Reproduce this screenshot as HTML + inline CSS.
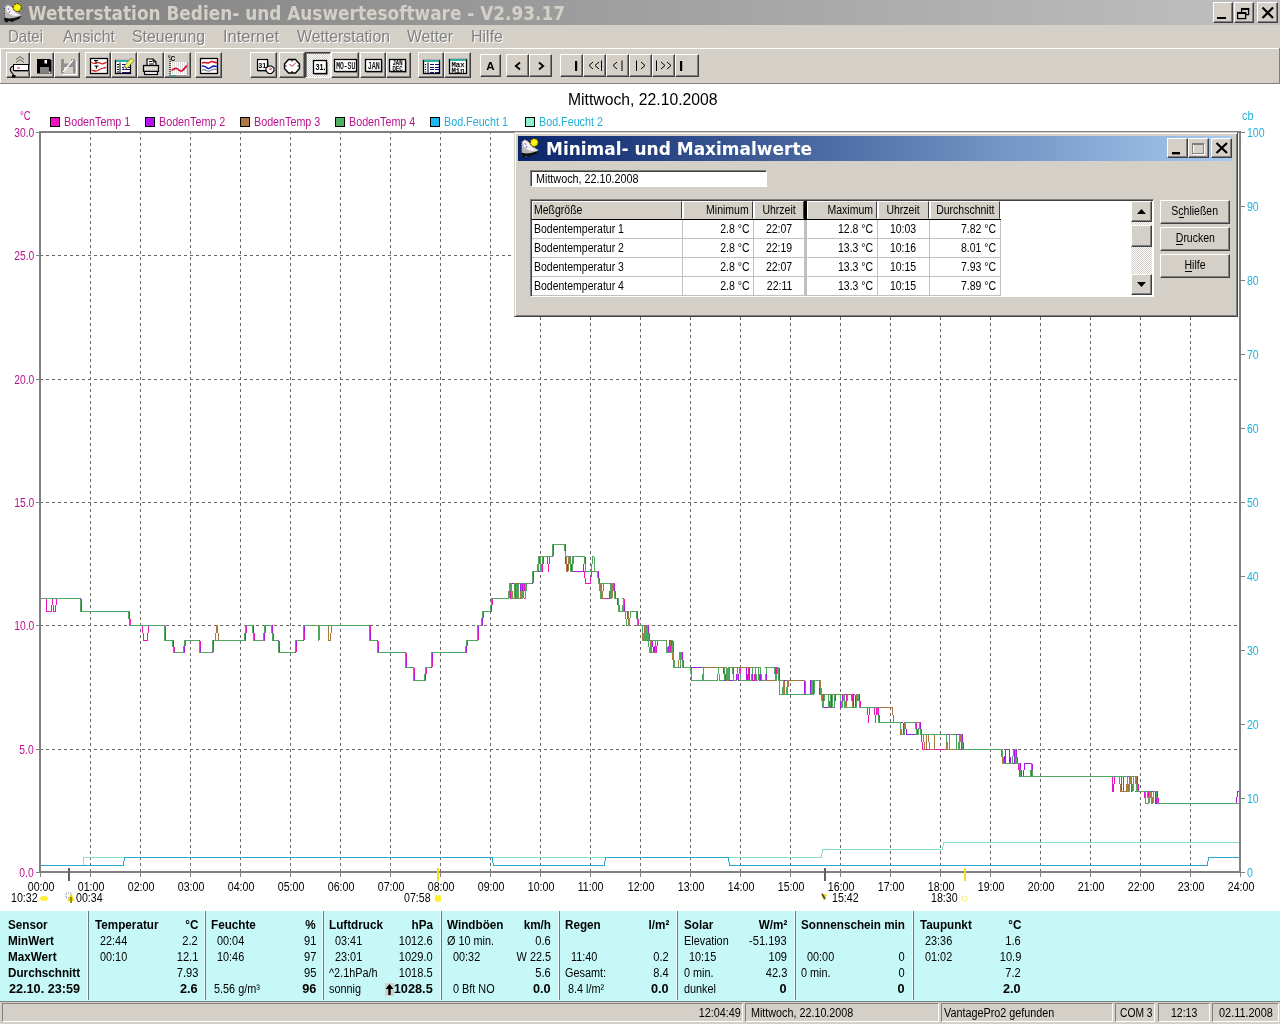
<!DOCTYPE html><html lang="de"><head><meta charset="utf-8"><title>Wetterstation Bedien- und Auswertesoftware</title><style>
html,body{margin:0;padding:0}
body{width:1280px;height:1024px;overflow:hidden;position:relative;background:#fff;font-family:"Liberation Sans",sans-serif;font-size:12px;color:#000}
.t{position:absolute;white-space:nowrap;display:block}
.a{position:absolute}
.btn{position:absolute;background:#d4d0c8;box-sizing:border-box;border:1px solid;border-color:#fff #404040 #404040 #fff;box-shadow:inset -1px -1px 0 #808080}
.btn.p{border-color:#404040 #fff #fff #404040;box-shadow:inset 1px 1px 0 #808080;background-color:#d4d0c8;background-image:linear-gradient(45deg,#fff 25%,transparent 25%,transparent 75%,#fff 75%),linear-gradient(45deg,#fff 25%,transparent 25%,transparent 75%,#fff 75%);background-size:2px 2px;background-position:0 0,1px 1px}
.sunk{position:absolute;box-sizing:border-box;border:1px solid;border-color:#808080 #fff #fff #808080}
svg{position:absolute;overflow:visible}
#root{position:absolute;left:0;top:0;width:1280px;height:1024px;will-change:transform}

</style></head><body><div id="root">
<div class="a" style="left:0;top:0;width:1280px;height:25px;background:linear-gradient(90deg,#808080 0%,#c0c0c0 100%)"></div>
<svg style="left:3px;top:3px" width="22" height="22" viewBox="0 0 22 22"><path d="M1.500 4L4.500 1.500L7 2.500L9 4L11 6.500L14 9L18.500 12L16 15L12 17L6 18.500L1.500 18.500Z" fill="#b8b8b8"/><path d="M3 4.500L5 2.500L8 4L10.500 7L13 10L17 12.500L12 13L8 12L4 9Z" fill="#f4f0fa"/><path d="M5 5l1 2M7 8l-1 2" stroke="#8070c0" stroke-width="1" fill="none"/><path d="M1.500 5v10" stroke="#303030" stroke-width="1" stroke-dasharray="1 1.500"/><path d="M1 14.500L6 15.500L11 15L16 13.500L18.500 13L16 16L12 17.500L9 19L6 18L4 19.500L1.500 18.500Z" fill="#101010"/><circle cx="14.200" cy="4.600" r="4" fill="#f4ec00" stroke="#181800" stroke-width="1" stroke-dasharray="2 1"/><circle cx="14.600" cy="4.200" r="2" fill="#fff820"/></svg>
<span class="t" style="top:4.42px;font-size:19px;line-height:19px;color:#d4d0c8;font-family:'DejaVu Sans Condensed','DejaVu Sans',sans-serif;font-weight:bold;left:28.00px;transform-origin:0 0;transform:scaleX(0.9895);">Wetterstation Bedien- und Auswertesoftware - V2.93.17</span>
<div class="btn" style="left:1213px;top:2px;width:20px;height:21px"></div>
<div class="btn" style="left:1234px;top:2px;width:20px;height:21px"></div>
<div class="btn" style="left:1257px;top:2px;width:21px;height:21px"></div>
<svg style="left:1213px;top:2px" width="64" height="20" viewBox="0 0 64 20"><rect x="4" y="15" width="9" height="2" fill="#000"/><g fill="none" stroke="#000" stroke-width="1.3"><rect x="28.6" y="6.6" width="7" height="6"/><rect x="24.6" y="10.6" width="8" height="6" fill="#d4d0c8"/></g><rect x="28" y="6" width="8.2" height="2" fill="#000"/><rect x="24" y="10" width="9.2" height="2" fill="#000"/><path d="M49.5 5.5 L60 16 M60 5.5 L49.5 16" stroke="#000" stroke-width="2.2" fill="none"/></svg>
<div class="a" style="left:0;top:25px;width:1280px;height:23px;background:#d4d0c8"></div>
<span class="t" style="top:28.61px;font-size:17px;line-height:17px;color:#fff;left:9.00px;transform-origin:0 0;transform:scaleX(0.8819);">Datei</span>
<span class="t" style="top:27.61px;font-size:17px;line-height:17px;color:#808080;left:8.00px;transform-origin:0 0;transform:scaleX(0.8819);">Datei</span>
<span class="t" style="top:28.61px;font-size:17px;line-height:17px;color:#fff;left:64.00px;transform-origin:0 0;transform:scaleX(0.9327);">Ansicht</span>
<span class="t" style="top:27.61px;font-size:17px;line-height:17px;color:#808080;left:63.00px;transform-origin:0 0;transform:scaleX(0.9327);">Ansicht</span>
<span class="t" style="top:28.61px;font-size:17px;line-height:17px;color:#fff;left:133.00px;transform-origin:0 0;transform:scaleX(0.9305);">Steuerung</span>
<span class="t" style="top:27.61px;font-size:17px;line-height:17px;color:#808080;left:132.00px;transform-origin:0 0;transform:scaleX(0.9305);">Steuerung</span>
<span class="t" style="top:28.61px;font-size:17px;line-height:17px;color:#fff;left:224.00px;transform-origin:0 0;transform:scaleX(0.9714);">Internet</span>
<span class="t" style="top:27.61px;font-size:17px;line-height:17px;color:#808080;left:223.00px;transform-origin:0 0;transform:scaleX(0.9714);">Internet</span>
<span class="t" style="top:28.61px;font-size:17px;line-height:17px;color:#fff;left:298.00px;transform-origin:0 0;transform:scaleX(0.9315);">Wetterstation</span>
<span class="t" style="top:27.61px;font-size:17px;line-height:17px;color:#808080;left:297.00px;transform-origin:0 0;transform:scaleX(0.9315);">Wetterstation</span>
<span class="t" style="top:28.61px;font-size:17px;line-height:17px;color:#fff;left:408.00px;transform-origin:0 0;transform:scaleX(0.9245);">Wetter</span>
<span class="t" style="top:27.61px;font-size:17px;line-height:17px;color:#808080;left:407.00px;transform-origin:0 0;transform:scaleX(0.9245);">Wetter</span>
<span class="t" style="top:28.61px;font-size:17px;line-height:17px;color:#fff;left:472.00px;transform-origin:0 0;transform:scaleX(0.9409);">Hilfe</span>
<span class="t" style="top:27.61px;font-size:17px;line-height:17px;color:#808080;left:471.00px;transform-origin:0 0;transform:scaleX(0.9409);">Hilfe</span>
<div class="a" style="left:0;top:48px;width:1280px;height:36px;background:#d4d0c8;box-sizing:border-box;border-top:1px solid #fff;border-bottom:1px solid #808080"></div>
<div class="a" style="left:0;top:48px;width:1px;height:35px;background:#fff"></div><div class="a" style="left:1279px;top:48px;width:1px;height:35px;background:#808080"></div>
<div class="btn" style="left:6px;top:52px;width:24px;height:26px"><svg style="left:-1px;top:0px" width="24" height="25" viewBox="0 0 24 25" ><path d="M10 6.5L14 3.5L18 6.5M10 9.5L14 6.5L18 9.5" fill="none" stroke="#606060" stroke-width="1"/><rect x="7.5" y="11.5" width="15" height="6" fill="#fff" stroke="#000" stroke-width="1"/><path d="M8 18.5h15M23.5 12v6.5" stroke="#808080" stroke-width="1" fill="none"/><path d="M11 15h3" stroke="#e02020" stroke-width="1"/><path d="M7.5 13C4.5 14 3.5 16 5 18.5S7.5 21 7.5 22.5" fill="none" stroke="#000" stroke-width="1.2"/><rect x="6" y="22" width="3.5" height="2.5" fill="#000"/></svg></div>
<div class="btn" style="left:30px;top:52px;width:24px;height:26px"><svg style="left:-1px;top:0px" width="24" height="25" viewBox="0 0 24 25" ><path d="M7 6h13l1.5 1.500V20.500H7z" fill="#000"/><rect x="10" y="14" width="9" height="6.5" fill="#808080"/><rect x="10" y="6" width="8" height="5" fill="#000"/><rect x="14.500" y="7" width="2.500" height="3.500" fill="#fff"/><rect x="19" y="18.500" width="1.500" height="1.500" fill="#fff"/></svg></div>
<div class="btn" style="left:54px;top:52px;width:26px;height:26px"><svg style="left:-1px;top:0px" width="26" height="25" viewBox="0 0 26 25" ><path d="M7 6h13l1.500 1.500V20.500H7z" fill="#909090"/><rect x="10" y="14" width="9" height="6.500" fill="#d4d0c8"/><rect x="10" y="6" width="7" height="4.500" fill="#d4d0c8"/><path d="M8 21.500h14.500V8" fill="none" stroke="#fff" stroke-width="1"/><path d="M9 19L19 7" stroke="#fff" stroke-width="1.200"/></svg></div>
<div class="btn" style="left:85px;top:52px;width:26px;height:26px"><svg style="left:-1px;top:0px" width="26" height="25" viewBox="0 0 26 25" ><rect x="5.500" y="5.500" width="17" height="15" fill="#fff" stroke="#000" stroke-width="1.300"/><path d="M6.500 9.500c2 1 3 1.500 5 .500s3-.500 4.500 .500s3 .500 5.500-1.500M6.500 17c2 .500 3 1.500 5 1s3.500-2 5-2.500s3 0 4.500-1.500" fill="none" stroke="#d81010" stroke-width="1.200"/><path d="M9 7.500h4M11 7.500v3M9.500 13h4M11.500 13v2.500" stroke="#000" stroke-width="1.200" fill="none"/></svg></div>
<div class="btn" style="left:111px;top:52px;width:26px;height:26px"><svg style="left:-1px;top:0px" width="26" height="25" viewBox="0 0 26 25" ><rect x="4.500" y="7.500" width="15" height="13" fill="#fff" stroke="#000" stroke-width="1.200"/><rect x="5" y="7" width="14" height="2" fill="#30b0a0"/><path d="M9 9.500V20" stroke="#000" stroke-width="1"/><path d="M6 11.500h2M6 14h2M6 16.500h2M6 19h2" stroke="#000" stroke-width="1"/><path d="M10.500 11.500h8M10.500 14h8M10.500 16.500h8M10.500 19h8" stroke="#101080" stroke-width="1" shape-rendering="crispEdges"/><path d="M13 13.500L20 5L23 7.500L16 15.500Z" fill="#f0f060" stroke="#606030" stroke-width=".600"/><path d="M13 13.500L12 17L16 15.500Z" fill="#fff" stroke="#404040" stroke-width=".600"/><path d="M12 17l1.500-.600-1-1z" fill="#000"/></svg></div>
<div class="btn" style="left:137px;top:52px;width:27px;height:26px"><svg style="left:-1px;top:0px" width="27" height="25" viewBox="0 0 27 25" ><path d="M10 13V6h6l3 3v4z" fill="#fff" stroke="#000" stroke-width="1.200"/><path d="M12 8.500h3M12 11h5M16 6v3h3" stroke="#000" stroke-width="1" fill="none"/><rect x="6.500" y="12.500" width="15" height="6" fill="#d4d0c8" stroke="#000" stroke-width="1.200"/><path d="M8 15.500h12" stroke="#fff" stroke-width="1.500" stroke-dasharray="1 1"/><rect x="7.500" y="18.500" width="13" height="3" fill="#fff" stroke="#000" stroke-width="1.200"/></svg></div>
<div class="btn" style="left:164px;top:52px;width:27px;height:26px"><svg style="left:-1px;top:0px" width="27" height="25" viewBox="0 0 27 25" ><rect x="7" y="9" width="16" height="13" fill="#fff"/><path d="M8 10h15M8 12h15M8 14h15M8 16h15M8 18h15M8 20h15" stroke="#c0c0c0" stroke-width="1" stroke-dasharray="1 1"/><path d="M23.500 9V22.500H7" fill="none" stroke="#a0a0a0" stroke-width="1"/><path d="M6 6v17" stroke="#000" stroke-width="1.200" stroke-dasharray="1 1"/><path d="M6 22.500h6" stroke="#30a090" stroke-width="1"/><path d="M7.500 17.500c2-1 3-2.500 5-2s3 3 5 2.500s3-3 5.500-5.500" fill="none" stroke="#e01030" stroke-width="1.800"/><text x="4" y="8" font-size="6.500" font-family="'Liberation Sans',sans-serif" font-weight="bold" fill="#000">°C</text></svg></div>
<div class="btn" style="left:195px;top:52px;width:27px;height:26px"><svg style="left:-1px;top:0px" width="27" height="25" viewBox="0 0 27 25" ><rect x="5.500" y="5.500" width="17" height="15" fill="#fff" stroke="#000" stroke-width="1.300"/><path d="M7 10c2-1 3-.500 5 0s3-1.500 5-1.500s2.500 1.500 5 1" fill="none" stroke="#e01020" stroke-width="1.600"/><path d="M7 13c2 0 3 0 4.500 1.500s3.500 1 5-.500s3.500-1 5.500-.500" fill="none" stroke="#1020c0" stroke-width="1.600"/><path d="M7 17c2-.500 3-.500 4.500 .500s3.500 .500 5-.500s3.500-.500 5.500-1" fill="none" stroke="#9090a0" stroke-width="1.400"/></svg></div>
<div class="btn" style="left:250px;top:52px;width:27px;height:26px"><svg style="left:-1px;top:0px" width="27" height="25" viewBox="0 0 27 25" ><rect x="7.500" y="6.500" width="10" height="11" fill="#fff" stroke="#000" stroke-width="1.200"/><path d="M8 18.500h10.500V8" stroke="#808080" stroke-width="1" fill="none"/><text x="8.300" y="15" font-size="8" font-family="'Liberation Sans',sans-serif" font-weight="bold" fill="#000" textLength="8" lengthAdjust="spacingAndGlyphs">31</text><path d="M16 15l2.500-2h3l2.500 2v3l-2.500 2.500h-3l-2.500-2.500z" fill="#fff" stroke="#000" stroke-width="1.100"/><path d="M20 14.500v2.500l2-1.500" fill="none" stroke="#d02020" stroke-width=".900"/></svg></div>
<div class="btn" style="left:279px;top:52px;width:26px;height:26px"><svg style="left:-1px;top:0px" width="26" height="25" viewBox="0 0 26 25" ><path d="M9.500 6.500h7l4 4.500v4.500l-4 4.500h-7l-4-4.500v-4.500z" fill="#fff" stroke="#000" stroke-width="1.300"/><path d="M13 6.500v2M13 18v2M5.500 13h2M18.500 13h2" stroke="#000" stroke-width="1.200"/><path d="M10.500 11l2.500 2.500l4-4" fill="none" stroke="#d02030" stroke-width="1"/></svg></div>
<div class="btn p" style="left:305px;top:52px;width:26px;height:26px"><svg style="left:-1px;top:0px" width="26" height="25" viewBox="0 0 26 25" ><g transform="translate(1,0)"><rect x="7.500" y="7.500" width="13" height="13" fill="#fff" stroke="#000" stroke-width="1.300"/><path d="M8.500 21.500h13V9" stroke="#808080" stroke-width="1" fill="none"/><text x="9.500" y="17.200" font-size="9.500" font-family="'Liberation Sans',sans-serif" font-weight="bold" fill="#000" textLength="10" lengthAdjust="spacingAndGlyphs">31.</text></g></svg></div>
<div class="btn" style="left:331px;top:52px;width:28px;height:26px"><svg style="left:-1px;top:0px" width="28" height="25" viewBox="0 0 28 25" ><g transform="translate(0,-1)"><rect x="3.500" y="7.500" width="22" height="12" fill="#fff" stroke="#000" stroke-width="1.300"/><path d="M4.500 20.500h22V9" stroke="#808080" stroke-width="1" fill="none"/><text x="5.200" y="17" font-size="10" font-family="'Liberation Mono',monospace" stroke="#000" stroke-width=".25" fill="#000" textLength="19" lengthAdjust="spacingAndGlyphs">MO-SU</text></g></svg></div>
<div class="btn" style="left:360px;top:52px;width:26px;height:26px"><svg style="left:-1px;top:0px" width="26" height="25" viewBox="0 0 26 25" ><g transform="translate(0,-1)"><rect x="5.500" y="7.500" width="16" height="12" fill="#fff" stroke="#000" stroke-width="1.300"/><path d="M6.500 20.500h16V9" stroke="#808080" stroke-width="1" fill="none"/><text x="7.700" y="17" font-size="10" font-family="'Liberation Mono',monospace" stroke="#000" stroke-width=".25" fill="#000" textLength="12" lengthAdjust="spacingAndGlyphs">JAN</text></g></svg></div>
<div class="btn" style="left:386px;top:52px;width:25px;height:26px"><svg style="left:-1px;top:0px" width="25" height="25" viewBox="0 0 25 25" ><g transform="translate(0,-1)"><rect x="3.500" y="7.500" width="16" height="12" fill="#fff" stroke="#000" stroke-width="1.300"/><path d="M4.500 20.500h16V9" stroke="#808080" stroke-width="1" fill="none"/><text x="6.500" y="13.400" font-size="7" font-family="'Liberation Mono',monospace" stroke="#000" stroke-width=".25" fill="#000" textLength="10" lengthAdjust="spacingAndGlyphs">JAN</text><text x="6.500" y="18.800" font-size="7" font-family="'Liberation Mono',monospace" stroke="#000" stroke-width=".25" fill="#000" textLength="10" lengthAdjust="spacingAndGlyphs">DEC</text></g></svg></div>
<div class="btn" style="left:418px;top:52px;width:26px;height:26px"><svg style="left:-1px;top:0px" width="26" height="25" viewBox="0 0 26 25" ><rect x="5.500" y="7.500" width="16" height="13" fill="#fff" stroke="#000" stroke-width="1.300"/><rect x="6" y="7" width="15" height="2" fill="#30b0a0"/><path d="M10 9.500V20" stroke="#000" stroke-width="1"/><path d="M7.500 11v9" stroke="#000" stroke-width="1.200" stroke-dasharray="1 1.500"/><path d="M11.500 11.500h9M11.500 14h9M11.500 16.500h9M11.500 19h9" stroke="#101080" stroke-width="1" stroke-dasharray="4 1" shape-rendering="crispEdges"/></svg></div>
<div class="btn" style="left:444px;top:52px;width:27px;height:26px"><svg style="left:-1px;top:0px" width="27" height="25" viewBox="0 0 27 25" ><rect x="5.500" y="6.500" width="17" height="14" fill="#fff" stroke="#000" stroke-width="1.300"/><rect x="6" y="6" width="16" height="2" fill="#30b0a0"/><text x="7.500" y="14" font-size="7.500" font-family="'Liberation Mono',monospace" stroke="#000" stroke-width=".25" fill="#000" textLength="13" lengthAdjust="spacingAndGlyphs">Max</text><text x="7.500" y="19.500" font-size="7.500" font-family="'Liberation Mono',monospace" stroke="#000" stroke-width=".25" fill="#000" textLength="13" lengthAdjust="spacingAndGlyphs">Min</text></svg></div>
<div class="btn" style="left:480px;top:54px;width:21px;height:23px"><svg style="left:-1px;top:-1px" width="21" height="23" viewBox="0 0 21 23" ><text x="10.500" y="16" font-size="11.500" text-anchor="middle" font-family="'Liberation Sans',sans-serif" font-weight="bold" fill="#000">A</text></svg></div>
<div class="btn" style="left:506px;top:54px;width:23px;height:23px"><svg style="left:-1px;top:-1px" width="23" height="23" viewBox="0 0 23 23" ><path d="M14 8.500L9.800 12L14 15.500" fill="none" stroke="#000" stroke-width="1.800"/></svg></div>
<div class="btn" style="left:529px;top:54px;width:23px;height:23px"><svg style="left:-1px;top:-1px" width="23" height="23" viewBox="0 0 23 23" ><path d="M10 8.500L14.200 12L10 15.500" fill="none" stroke="#000" stroke-width="1.800"/></svg></div>
<div class="btn" style="left:560px;top:54px;width:23px;height:23px"><svg style="left:-1px;top:-1px" width="23" height="23" viewBox="0 0 23 23" ><rect x="15" y="7" width="2.200" height="10" fill="#000"/></svg></div>
<div class="btn" style="left:583px;top:54px;width:23px;height:23px"><svg style="left:-1px;top:-1px" width="23" height="23" viewBox="0 0 23 23" ><path d="M10 8L6 11.500L10 15M16 8L12 11.500L16 15M18.500 6.500v10.500" fill="none" stroke="#000" stroke-width="1"/></svg></div>
<div class="btn" style="left:606px;top:54px;width:23px;height:23px"><svg style="left:-1px;top:-1px" width="23" height="23" viewBox="0 0 23 23" ><path d="M11 8L7 11.500L11 15M16 6.500v10.500" fill="none" stroke="#000" stroke-width="1"/></svg></div>
<div class="btn" style="left:629px;top:54px;width:23px;height:23px"><svg style="left:-1px;top:-1px" width="23" height="23" viewBox="0 0 23 23" ><path d="M12 8L16 11.500L12 15M7.500 6.500v10.500" fill="none" stroke="#000" stroke-width="1"/></svg></div>
<div class="btn" style="left:652px;top:54px;width:23px;height:23px"><svg style="left:-1px;top:-1px" width="23" height="23" viewBox="0 0 23 23" ><path d="M9 8L13 11.500L9 15M15 8L19 11.500L15 15M4.500 6.500v10.500" fill="none" stroke="#000" stroke-width="1"/></svg></div>
<div class="btn" style="left:675px;top:54px;width:24px;height:23px"><svg style="left:-1px;top:-1px" width="24" height="23" viewBox="0 0 24 23" ><rect x="5" y="7" width="2.200" height="10" fill="#000"/></svg></div>
<svg style="left:0;top:0" width="1280" height="1024" viewBox="0 0 1280 1024" shape-rendering="crispEdges">
<path d="M90.5 131V871M140.5 131V871M190.5 131V871M240.5 131V871M290.5 131V871M340.5 131V871M390.5 131V871M440.5 131V871M490.5 131V871M540.5 131V871M590.5 131V871M640.5 131V871M690.5 131V871M740.5 131V871M790.5 131V871M840.5 131V871M890.5 131V871M940.5 131V871M990.5 131V871M1040.5 131V871M1090.5 131V871M1140.5 131V871M1190.5 131V871M40 749.5H1239M40 625.5H1239M40 502.5H1239M40 379.5H1239M40 255.5H1239" stroke="#686868" stroke-width="1" stroke-dasharray="3 3" fill="none"/>
<g fill="none" stroke-width="1" shape-rendering="crispEdges">
<path d="M40 865.5H83L84 857.5H821.5L822.5 849.5H942.5L943.5 842.5H1240" stroke="#88e0c8"/>
<path d="M40 865.5H123.5L124.5 857.5H492L493.5 865.5H604.5L605.5 857.5H728.5L729.5 865.5H1207.5L1208.5 857.5H1240" stroke="#2ea6d4"/>
<path d="M40.0 598.5H46.0L47.0 611.5H51.5L52.5 598.5H52.5L53.5 611.5H55.5L56.5 598.5H81.0L82.0 611.5H129.5L130.5 625.5H142.5L143.5 640.5H147.5L148.5 625.5H165.0L166.0 640.5H173.5L174.5 652.5H184.5L185.5 640.5H200.0L201.0 652.5H213.0L214.0 640.5H245.5L246.5 625.5H253.5L254.5 640.5H264.5L265.5 625.5H272.5L273.5 640.5H279.0L280.0 652.5H296.0L297.0 640.5H304.0L305.0 625.5H328.0L329.0 640.5H330.5L331.5 625.5H370.0L371.0 640.5H378.0L379.0 652.5H406.0L407.0 667.5H414.0L415.0 680.5H425.5L426.5 667.5H432.0L433.0 652.5H466.5L467.5 640.5H478.0L479.0 625.5H482.5L483.5 611.5H491.5L492.5 598.5H508.5L509.5 583.5H510.0L511.0 598.5H510.5L511.5 583.5H511.5L512.5 598.5H515.0L516.0 583.5H517.0L518.0 598.5H522.0L523.0 583.5H524.5L525.5 598.5H525.0L526.0 583.5H533.0L534.0 571.5H538.5L539.5 556.5H540.5L541.5 571.5H542.5L543.5 556.5H547.5L548.5 571.5H548.5L549.5 556.5H553.0L554.0 544.5H565.5L566.5 571.5H567.5L568.5 556.5H570.5L571.5 571.5H584.5L585.5 583.5H590.5L591.5 571.5H598.5L599.5 583.5H600.5L601.5 598.5H609.5L610.5 583.5H610.0L611.0 598.5H612.0L613.0 583.5H614.5L615.5 598.5H618.0L619.0 611.5H622.5L623.5 598.5H624.0L625.0 611.5H627.5L628.5 625.5H629.5L630.5 611.5H637.5L638.5 625.5H642.5L643.5 640.5H644.5L645.5 625.5H646.0L647.0 640.5H647.5L648.5 625.5H648.5L649.5 640.5H652.5L653.5 652.5H654.5L655.5 640.5H655.0L656.0 652.5H656.5L657.5 640.5H666.5L667.5 652.5H668.5L669.5 640.5H670.0L671.0 652.5H671.0L672.0 640.5H673.0L674.0 652.5H673.5L674.5 667.5H680.0L681.0 652.5H682.5L683.5 667.5H723.5L724.5 680.5H725.5L726.5 667.5H727.0L728.0 680.5H728.5L729.5 667.5H733.0L734.0 680.5H736.5L737.5 667.5H740.0L741.0 680.5H747.5L748.5 667.5H748.0L749.0 680.5H754.5L755.5 667.5H755.0L756.0 680.5H758.0L759.0 667.5H758.5L759.5 680.5H765.5L766.5 667.5H775.5L776.5 680.5H776.0L777.0 667.5H777.5L778.5 680.5H783.5L784.5 694.5H787.0L788.0 680.5H805.0L806.0 694.5H811.0L812.0 680.5H813.0L814.0 694.5H814.0L815.0 680.5H819.0L820.0 694.5H821.5L822.5 707.5H823.0L824.0 694.5H828.5L829.5 707.5H830.5L831.5 694.5H843.5L844.5 707.5H846.0L847.0 694.5H852.5L853.5 707.5H856.5L857.5 694.5H859.5L860.5 707.5H867.5L868.5 722.5H868.5L869.5 707.5H874.5L875.5 722.5H875.5L876.5 707.5H878.5L879.5 722.5H903.0L904.0 734.5H904.5L905.5 722.5H916.5L917.5 734.5H918.5L919.5 722.5H920.5L921.5 734.5H921.5L922.5 749.5H961.5L962.5 734.5H962.5L963.5 749.5H1001.5L1002.5 763.5H1015.5L1016.5 749.5H1016.5L1017.5 763.5H1018.5L1019.5 776.5H1031.0L1032.0 763.5H1031.5L1032.5 776.5H1112.0L1113.0 791.5H1113.5L1114.5 776.5H1121.0L1122.0 791.5H1123.0L1124.0 776.5H1127.5L1128.5 791.5H1129.5L1130.5 776.5H1131.0L1132.0 791.5H1133.0L1134.0 776.5H1135.5L1136.5 791.5H1136.0L1137.0 776.5H1137.5L1138.5 791.5H1144.5L1145.5 803.5H1148.0L1149.0 791.5H1151.0L1152.0 803.5H1152.5L1153.5 791.5H1155.0L1156.0 803.5H1156.5L1157.5 791.5H1157.5L1158.5 803.5H1240" stroke="#e818b8"/>
<path d="M40.0 598.5H80.5L81.5 611.5H129.0L130.0 625.5H164.5L165.5 640.5H173.0L174.0 652.5H184.0L185.0 640.5H199.5L200.5 652.5H212.5L213.5 640.5H245.0L246.0 625.5H253.0L254.0 640.5H264.0L265.0 625.5H272.0L273.0 640.5H278.5L279.5 652.5H295.5L296.5 640.5H303.5L304.5 625.5H369.5L370.5 640.5H377.5L378.5 652.5H405.5L406.5 667.5H413.5L414.5 680.5H425.0L426.0 667.5H431.5L432.5 652.5H466.0L467.0 640.5H477.5L478.5 625.5H482.0L483.0 611.5H491.0L492.0 598.5H508.5L509.5 583.5H520.0L521.0 598.5H522.0L523.0 583.5H532.5L533.5 571.5H541.5L542.5 556.5H552.5L553.5 544.5H565.0L566.0 556.5H565.5L566.5 571.5H567.5L568.5 556.5H570.5L571.5 571.5H583.5L584.5 556.5H585.0L586.0 571.5H591.5L592.5 556.5H594.0L595.0 571.5H598.0L599.0 583.5H610.0L611.0 598.5H611.5L612.5 583.5H614.0L615.0 598.5H617.5L618.5 611.5H622.5L623.5 598.5H623.5L624.5 611.5H628.5L629.5 625.5H629.5L630.5 611.5H637.0L638.0 625.5H648.0L649.0 640.5H652.5L653.5 652.5H654.5L655.5 640.5H666.5L667.5 652.5H668.5L669.5 640.5H672.5L673.5 667.5H680.5L681.5 652.5H682.0L683.0 667.5H723.5L724.5 680.5H726.0L727.0 667.5H726.5L727.5 680.5H728.5L729.5 667.5H729.0L730.0 680.5H736.5L737.5 667.5H737.5L738.5 680.5H746.0L747.0 667.5H749.0L750.0 680.5H752.0L753.0 667.5H760.0L761.0 680.5H765.5L766.5 667.5H766.0L767.0 680.5H776.5L777.5 667.5H779.0L780.0 680.5H804.0L805.0 694.5H810.0L811.0 680.5H811.0L812.0 694.5H814.0L815.0 680.5H819.0L820.0 694.5H821.5L822.5 707.5H830.0L831.0 694.5H831.0L832.0 707.5H834.5L835.5 694.5H840.0L841.0 707.5H842.0L843.0 694.5H851.5L852.5 707.5H853.0L854.0 694.5H855.0L856.0 707.5H856.5L857.5 694.5H859.0L860.0 707.5H892.5L893.5 722.5H903.0L904.0 734.5H904.5L905.5 722.5H905.5L906.5 734.5H918.5L919.5 722.5H920.0L921.0 734.5H962.0L963.0 749.5H1001.5L1002.5 763.5H1004.5L1005.5 749.5H1005.0L1006.0 763.5H1009.0L1010.0 749.5H1009.5L1010.5 763.5H1014.0L1015.0 749.5H1016.0L1017.0 763.5H1020.5L1021.5 776.5H1023.5L1024.5 763.5H1032.0L1033.0 776.5H1137.0L1138.0 791.5H1155.0L1156.0 803.5H1156.5L1157.5 791.5H1157.0L1158.0 803.5H1236.5L1237.5 791.5H1240" stroke="#a818e8"/>
<path d="M40.0 598.5H80.0L81.0 611.5H128.5L129.5 625.5H164.0L165.0 640.5H172.5L173.5 652.5H183.5L184.5 640.5H199.0L200.0 652.5H212.0L213.0 640.5H215.5L216.5 625.5H217.5L218.5 640.5H244.5L245.5 625.5H252.5L253.5 640.5H263.5L264.5 625.5H271.5L272.5 640.5H278.0L279.0 652.5H295.0L296.0 640.5H303.0L304.0 625.5H328.0L329.0 640.5H330.5L331.5 625.5H369.0L370.0 640.5H377.0L378.0 652.5H405.0L406.0 667.5H413.0L414.0 680.5H424.5L425.5 667.5H431.0L432.0 652.5H465.5L466.5 640.5H477.0L478.0 625.5H481.5L482.5 611.5H490.5L491.5 598.5H509.0L510.0 583.5H511.5L512.5 598.5H516.0L517.0 583.5H517.0L518.0 598.5H520.5L521.5 583.5H521.0L522.0 598.5H523.0L524.0 583.5H532.0L533.0 571.5H537.5L538.5 556.5H552.0L553.0 544.5H564.5L565.5 556.5H566.0L567.0 571.5H568.0L569.0 556.5H569.5L570.5 571.5H572.5L573.5 556.5H584.5L585.5 571.5H597.5L598.5 583.5H600.5L601.5 598.5H602.5L603.5 583.5H610.0L611.0 598.5H612.0L613.0 583.5H613.5L614.5 598.5H618.5L619.5 611.5H622.5L623.5 598.5H623.0L624.0 611.5H628.0L629.0 625.5H629.5L630.5 611.5H636.5L637.5 625.5H642.0L643.0 640.5H643.5L644.5 625.5H645.0L646.0 640.5H647.0L648.0 625.5H647.5L648.5 640.5H648.5L649.5 652.5H650.0L651.0 640.5H651.0L652.0 652.5H655.0L656.0 640.5H666.5L667.5 652.5H669.5L670.5 640.5H672.0L673.0 652.5H672.5L673.5 667.5H678.5L679.5 652.5H681.5L682.5 667.5H691.0L692.0 680.5H703.0L704.0 667.5H727.0L728.0 680.5H729.0L730.0 667.5H760.5L761.5 680.5H776.5L777.5 667.5H777.5L778.5 680.5H784.0L785.0 694.5H787.5L788.5 680.5H805.0L806.0 694.5H811.0L812.0 680.5H820.5L821.5 694.5H822.5L823.5 707.5H823.5L824.5 694.5H844.5L845.5 707.5H846.5L847.5 694.5H851.5L852.5 707.5H856.0L857.0 694.5H858.5L859.5 707.5H892.5L893.5 722.5H900.0L901.0 734.5H904.0L905.0 722.5H919.5L920.5 734.5H923.5L924.5 749.5H926.0L927.0 734.5H928.5L929.5 749.5H934.0L935.0 734.5H946.0L947.0 749.5H959.5L960.5 734.5H961.5L962.5 749.5H1001.5L1002.5 763.5H1012.5L1013.5 749.5H1015.0L1016.0 763.5H1019.5L1020.5 776.5H1119.5L1120.5 791.5H1126.5L1127.5 776.5H1127.5L1128.5 791.5H1129.5L1130.5 776.5H1136.5L1137.5 791.5H1145.0L1146.0 803.5H1148.5L1149.5 791.5H1150.5L1151.5 803.5H1152.5L1153.5 791.5H1156.5L1157.5 803.5H1240" stroke="#a87840"/>
<path d="M40.0 598.5H80.0L81.0 611.5H128.5L129.5 625.5H164.0L165.0 640.5H172.5L173.5 652.5H183.5L184.5 640.5H199.0L200.0 652.5H212.0L213.0 640.5H244.5L245.5 625.5H252.5L253.5 640.5H263.5L264.5 625.5H271.5L272.5 640.5H278.0L279.0 652.5H295.0L296.0 640.5H303.0L304.0 625.5H318.0L319.0 640.5H319.0L320.0 625.5H369.0L370.0 640.5H377.0L378.0 652.5H405.0L406.0 667.5H413.0L414.0 680.5H424.5L425.5 667.5H431.0L432.0 652.5H465.5L466.5 640.5H477.0L478.0 625.5H481.5L482.5 611.5H490.5L491.5 598.5H508.5L509.5 583.5H510.5L511.5 598.5H514.0L515.0 583.5H516.0L517.0 598.5H518.0L519.0 583.5H521.0L522.0 598.5H522.5L523.5 583.5H525.0L526.0 598.5H525.5L526.5 583.5H532.0L533.0 571.5H538.0L539.0 556.5H540.0L541.0 571.5H541.5L542.5 556.5H552.0L553.0 544.5H564.5L565.5 556.5H570.0L571.0 571.5H572.0L573.0 556.5H584.5L585.5 571.5H591.5L592.5 556.5H594.0L595.0 571.5H597.5L598.5 583.5H599.5L600.5 598.5H601.0L602.0 583.5H610.0L611.0 598.5H611.0L612.0 583.5H613.5L614.5 598.5H618.0L619.0 611.5H622.5L623.5 598.5H623.0L624.0 611.5H625.5L626.5 625.5H629.5L630.5 611.5H636.5L637.5 625.5H642.5L643.5 640.5H644.5L645.5 625.5H646.0L647.0 640.5H647.0L648.0 625.5H647.5L648.5 640.5H648.5L649.5 652.5H650.5L651.5 640.5H666.0L667.0 652.5H671.5L672.5 640.5H672.0L673.0 652.5H673.5L674.5 667.5H680.0L681.0 652.5H681.5L682.5 667.5H690.5L691.5 680.5H702.5L703.5 667.5H703.0L704.0 680.5H717.5L718.5 667.5H718.5L719.5 680.5H724.0L725.0 667.5H726.0L727.0 680.5H728.0L729.0 667.5H732.5L733.5 680.5H737.0L738.0 667.5H739.5L740.5 680.5H751.5L752.5 667.5H755.5L756.5 680.5H758.0L759.0 667.5H760.5L761.5 680.5H765.5L766.5 667.5H774.5L775.5 680.5H776.5L777.5 667.5H778.5L779.5 694.5H782.5L783.5 680.5H783.0L784.0 694.5H786.5L787.5 680.5H787.0L788.0 694.5H811.5L812.5 680.5H812.0L813.0 694.5H814.0L815.0 680.5H819.5L820.5 694.5H821.5L822.5 707.5H823.5L824.5 694.5H828.0L829.0 707.5H830.0L831.0 694.5H832.0L833.0 707.5H834.0L835.0 694.5H840.5L841.5 707.5H842.5L843.5 694.5H844.0L845.0 707.5H856.5L857.5 694.5H858.5L859.5 707.5H877.5L878.5 722.5H900.5L901.5 734.5H904.5L905.5 722.5H915.5L916.5 734.5H918.5L919.5 722.5H919.5L920.5 734.5H946.5L947.5 749.5H949.0L950.0 734.5H956.0L957.0 749.5H958.5L959.5 734.5H961.5L962.5 749.5H1002.5L1003.5 763.5H1012.5L1013.5 749.5H1015.5L1016.5 763.5H1019.5L1020.5 776.5H1030.5L1031.5 763.5H1031.5L1032.5 776.5H1127.0L1128.0 791.5H1129.0L1130.0 776.5H1131.5L1132.5 791.5H1133.0L1134.0 776.5H1135.5L1136.5 791.5H1147.5L1148.5 803.5H1149.0L1150.0 791.5H1151.0L1152.0 803.5H1153.0L1154.0 791.5H1156.5L1157.5 803.5H1240" stroke="#50a860"/>
</g>
<g fill="#808080"><rect x="39" y="131" width="2" height="742"/><rect x="1239" y="131" width="2" height="742"/><rect x="39" y="131" width="1202" height="2"/><rect x="39" y="871" width="1202" height="2"/>
<rect x="36" y="872" width="3" height="1"/>
<rect x="36" y="749" width="3" height="1"/>
<rect x="36" y="625" width="3" height="1"/>
<rect x="36" y="502" width="3" height="1"/>
<rect x="36" y="379" width="3" height="1"/>
<rect x="36" y="255" width="3" height="1"/>
<rect x="36" y="132" width="3" height="1"/>
<rect x="1241" y="872" width="4" height="1"/>
<rect x="1241" y="798" width="4" height="1"/>
<rect x="1241" y="724" width="4" height="1"/>
<rect x="1241" y="650" width="4" height="1"/>
<rect x="1241" y="576" width="4" height="1"/>
<rect x="1241" y="502" width="4" height="1"/>
<rect x="1241" y="428" width="4" height="1"/>
<rect x="1241" y="354" width="4" height="1"/>
<rect x="1241" y="280" width="4" height="1"/>
<rect x="1241" y="206" width="4" height="1"/>
<rect x="1241" y="132" width="4" height="1"/>
<rect x="40" y="873" width="1" height="4"/>
<rect x="90" y="873" width="1" height="4"/>
<rect x="140" y="873" width="1" height="4"/>
<rect x="190" y="873" width="1" height="4"/>
<rect x="240" y="873" width="1" height="4"/>
<rect x="290" y="873" width="1" height="4"/>
<rect x="340" y="873" width="1" height="4"/>
<rect x="390" y="873" width="1" height="4"/>
<rect x="440" y="873" width="1" height="4"/>
<rect x="490" y="873" width="1" height="4"/>
<rect x="540" y="873" width="1" height="4"/>
<rect x="590" y="873" width="1" height="4"/>
<rect x="640" y="873" width="1" height="4"/>
<rect x="690" y="873" width="1" height="4"/>
<rect x="740" y="873" width="1" height="4"/>
<rect x="790" y="873" width="1" height="4"/>
<rect x="840" y="873" width="1" height="4"/>
<rect x="890" y="873" width="1" height="4"/>
<rect x="940" y="873" width="1" height="4"/>
<rect x="990" y="873" width="1" height="4"/>
<rect x="1040" y="873" width="1" height="4"/>
<rect x="1090" y="873" width="1" height="4"/>
<rect x="1140" y="873" width="1" height="4"/>
<rect x="1190" y="873" width="1" height="4"/>
<rect x="1240" y="873" width="1" height="4"/>
</g>
<rect x="68" y="868" width="2" height="13" fill="#606060"/><rect x="824" y="868" width="2" height="13" fill="#606060"/>
<rect x="437" y="868" width="2" height="13" fill="#f0e020"/><rect x="964" y="868" width="2" height="13" fill="#f0e020"/>
<g shape-rendering="auto">
<ellipse cx="44" cy="898.5" rx="4" ry="2.5" fill="#ffee30"/>
<path d="M66 893h5v5h-5z" fill="none" stroke="#8080c0" stroke-width="1" stroke-dasharray="1 1"/><path d="M71 893l3.5 8h-7z" fill="#f0d800"/><rect x="70" y="897" width="2" height="6" fill="#a09000"/>
<circle cx="438" cy="898.5" r="3.4" fill="#ffee30"/>
<path d="M821 893l6 2-3 6z" fill="#f0d800"/><path d="M822 894l3 5" stroke="#404040" stroke-width="1.5"/>
<circle cx="964.5" cy="898.5" r="2.5" fill="none" stroke="#f6f088" stroke-width="1.2"/>
</g>
<rect x="50.5" y="117.5" width="9" height="9" fill="#f010c0" stroke="#000" stroke-width="1"/>
<rect x="145.5" y="117.5" width="9" height="9" fill="#b414f0" stroke="#000" stroke-width="1"/>
<rect x="240.5" y="117.5" width="9" height="9" fill="#b07840" stroke="#000" stroke-width="1"/>
<rect x="335.5" y="117.5" width="9" height="9" fill="#50b060" stroke="#000" stroke-width="1"/>
<rect x="430.5" y="117.5" width="9" height="9" fill="#20b8f0" stroke="#000" stroke-width="1"/>
<rect x="525.5" y="117.5" width="9" height="9" fill="#90f0d0" stroke="#000" stroke-width="1"/>
</svg>
<span class="t" style="top:92.46px;font-size:16px;line-height:16px;color:#000;left:568.00px;transform-origin:0 0;transform:scaleX(0.9829);">Mittwoch, 22.10.2008</span>
<span class="t" style="top:115.84px;font-size:12px;line-height:12px;color:#b8128e;left:64.00px;transform-origin:0 0;transform:scaleX(0.8950);">BodenTemp 1</span>
<span class="t" style="top:115.84px;font-size:12px;line-height:12px;color:#b8128e;left:159.00px;transform-origin:0 0;transform:scaleX(0.8950);">BodenTemp 2</span>
<span class="t" style="top:115.84px;font-size:12px;line-height:12px;color:#b8128e;left:254.00px;transform-origin:0 0;transform:scaleX(0.8950);">BodenTemp 3</span>
<span class="t" style="top:115.84px;font-size:12px;line-height:12px;color:#b8128e;left:349.00px;transform-origin:0 0;transform:scaleX(0.8950);">BodenTemp 4</span>
<span class="t" style="top:115.84px;font-size:12px;line-height:12px;color:#20b0d8;left:444.00px;transform-origin:0 0;transform:scaleX(0.8950);">Bod.Feucht 1</span>
<span class="t" style="top:115.84px;font-size:12px;line-height:12px;color:#20b0d8;left:539.00px;transform-origin:0 0;transform:scaleX(0.8950);">Bod.Feucht 2</span>
<span class="t" style="top:110.34px;font-size:12px;line-height:12px;color:#b8128e;left:20.00px;transform-origin:0 0;transform:scaleX(0.8000);">°C</span>
<span class="t" style="top:110.34px;font-size:12px;line-height:12px;color:#20b0d8;left:1242.00px;transform-origin:0 0;transform:scaleX(0.9000);">cb</span>
<span class="t" style="top:866.84px;font-size:12px;line-height:12px;color:#b8128e;left:17.32px;transform-origin:100% 0;transform:scaleX(0.8600);">0.0</span>
<span class="t" style="top:743.51px;font-size:12px;line-height:12px;color:#b8128e;left:17.32px;transform-origin:100% 0;transform:scaleX(0.8600);">5.0</span>
<span class="t" style="top:620.18px;font-size:12px;line-height:12px;color:#b8128e;left:10.64px;transform-origin:100% 0;transform:scaleX(0.8600);">10.0</span>
<span class="t" style="top:496.84px;font-size:12px;line-height:12px;color:#b8128e;left:10.64px;transform-origin:100% 0;transform:scaleX(0.8600);">15.0</span>
<span class="t" style="top:373.51px;font-size:12px;line-height:12px;color:#b8128e;left:10.64px;transform-origin:100% 0;transform:scaleX(0.8600);">20.0</span>
<span class="t" style="top:250.18px;font-size:12px;line-height:12px;color:#b8128e;left:10.64px;transform-origin:100% 0;transform:scaleX(0.8600);">25.0</span>
<span class="t" style="top:126.84px;font-size:12px;line-height:12px;color:#b8128e;left:10.64px;transform-origin:100% 0;transform:scaleX(0.8600);">30.0</span>
<span class="t" style="top:867.04px;font-size:12px;line-height:12px;color:#20b0d8;left:1247.00px;transform-origin:0 0;transform:scaleX(0.8800);">0</span>
<span class="t" style="top:793.04px;font-size:12px;line-height:12px;color:#20b0d8;left:1247.00px;transform-origin:0 0;transform:scaleX(0.8800);">10</span>
<span class="t" style="top:719.04px;font-size:12px;line-height:12px;color:#20b0d8;left:1247.00px;transform-origin:0 0;transform:scaleX(0.8800);">20</span>
<span class="t" style="top:645.04px;font-size:12px;line-height:12px;color:#20b0d8;left:1247.00px;transform-origin:0 0;transform:scaleX(0.8800);">30</span>
<span class="t" style="top:571.04px;font-size:12px;line-height:12px;color:#20b0d8;left:1247.00px;transform-origin:0 0;transform:scaleX(0.8800);">40</span>
<span class="t" style="top:497.04px;font-size:12px;line-height:12px;color:#20b0d8;left:1247.00px;transform-origin:0 0;transform:scaleX(0.8800);">50</span>
<span class="t" style="top:423.04px;font-size:12px;line-height:12px;color:#20b0d8;left:1247.00px;transform-origin:0 0;transform:scaleX(0.8800);">60</span>
<span class="t" style="top:349.04px;font-size:12px;line-height:12px;color:#20b0d8;left:1247.00px;transform-origin:0 0;transform:scaleX(0.8800);">70</span>
<span class="t" style="top:275.04px;font-size:12px;line-height:12px;color:#20b0d8;left:1247.00px;transform-origin:0 0;transform:scaleX(0.8800);">80</span>
<span class="t" style="top:201.04px;font-size:12px;line-height:12px;color:#20b0d8;left:1247.00px;transform-origin:0 0;transform:scaleX(0.8800);">90</span>
<span class="t" style="top:127.04px;font-size:12px;line-height:12px;color:#20b0d8;left:1247.00px;transform-origin:0 0;transform:scaleX(0.8800);">100</span>
<span class="t" style="top:881.34px;font-size:12px;line-height:12px;color:#000;left:25.98px;transform-origin:50% 0;transform:scaleX(0.8850);">00:00</span>
<span class="t" style="top:881.34px;font-size:12px;line-height:12px;color:#000;left:75.98px;transform-origin:50% 0;transform:scaleX(0.8850);">01:00</span>
<span class="t" style="top:881.34px;font-size:12px;line-height:12px;color:#000;left:125.98px;transform-origin:50% 0;transform:scaleX(0.8850);">02:00</span>
<span class="t" style="top:881.34px;font-size:12px;line-height:12px;color:#000;left:175.99px;transform-origin:50% 0;transform:scaleX(0.8850);">03:00</span>
<span class="t" style="top:881.34px;font-size:12px;line-height:12px;color:#000;left:225.99px;transform-origin:50% 0;transform:scaleX(0.8850);">04:00</span>
<span class="t" style="top:881.34px;font-size:12px;line-height:12px;color:#000;left:275.99px;transform-origin:50% 0;transform:scaleX(0.8850);">05:00</span>
<span class="t" style="top:881.34px;font-size:12px;line-height:12px;color:#000;left:325.99px;transform-origin:50% 0;transform:scaleX(0.8850);">06:00</span>
<span class="t" style="top:881.34px;font-size:12px;line-height:12px;color:#000;left:375.99px;transform-origin:50% 0;transform:scaleX(0.8850);">07:00</span>
<span class="t" style="top:881.34px;font-size:12px;line-height:12px;color:#000;left:425.99px;transform-origin:50% 0;transform:scaleX(0.8850);">08:00</span>
<span class="t" style="top:881.34px;font-size:12px;line-height:12px;color:#000;left:475.99px;transform-origin:50% 0;transform:scaleX(0.8850);">09:00</span>
<span class="t" style="top:881.34px;font-size:12px;line-height:12px;color:#000;left:525.99px;transform-origin:50% 0;transform:scaleX(0.8850);">10:00</span>
<span class="t" style="top:881.34px;font-size:12px;line-height:12px;color:#000;left:576.43px;transform-origin:50% 0;transform:scaleX(0.8850);">11:00</span>
<span class="t" style="top:881.34px;font-size:12px;line-height:12px;color:#000;left:625.99px;transform-origin:50% 0;transform:scaleX(0.8850);">12:00</span>
<span class="t" style="top:881.34px;font-size:12px;line-height:12px;color:#000;left:675.99px;transform-origin:50% 0;transform:scaleX(0.8850);">13:00</span>
<span class="t" style="top:881.34px;font-size:12px;line-height:12px;color:#000;left:725.99px;transform-origin:50% 0;transform:scaleX(0.8850);">14:00</span>
<span class="t" style="top:881.34px;font-size:12px;line-height:12px;color:#000;left:775.99px;transform-origin:50% 0;transform:scaleX(0.8850);">15:00</span>
<span class="t" style="top:881.34px;font-size:12px;line-height:12px;color:#000;left:825.99px;transform-origin:50% 0;transform:scaleX(0.8850);">16:00</span>
<span class="t" style="top:881.34px;font-size:12px;line-height:12px;color:#000;left:875.99px;transform-origin:50% 0;transform:scaleX(0.8850);">17:00</span>
<span class="t" style="top:881.34px;font-size:12px;line-height:12px;color:#000;left:925.99px;transform-origin:50% 0;transform:scaleX(0.8850);">18:00</span>
<span class="t" style="top:881.34px;font-size:12px;line-height:12px;color:#000;left:975.99px;transform-origin:50% 0;transform:scaleX(0.8850);">19:00</span>
<span class="t" style="top:881.34px;font-size:12px;line-height:12px;color:#000;left:1025.98px;transform-origin:50% 0;transform:scaleX(0.8850);">20:00</span>
<span class="t" style="top:881.34px;font-size:12px;line-height:12px;color:#000;left:1075.98px;transform-origin:50% 0;transform:scaleX(0.8850);">21:00</span>
<span class="t" style="top:881.34px;font-size:12px;line-height:12px;color:#000;left:1125.98px;transform-origin:50% 0;transform:scaleX(0.8850);">22:00</span>
<span class="t" style="top:881.34px;font-size:12px;line-height:12px;color:#000;left:1175.98px;transform-origin:50% 0;transform:scaleX(0.8850);">23:00</span>
<span class="t" style="top:881.34px;font-size:12px;line-height:12px;color:#000;left:1225.98px;transform-origin:50% 0;transform:scaleX(0.8850);">24:00</span>
<span class="t" style="top:892.34px;font-size:12px;line-height:12px;color:#000;left:11.00px;transform-origin:0 0;transform:scaleX(0.8850);">10:32</span>
<span class="t" style="top:892.34px;font-size:12px;line-height:12px;color:#000;left:76.00px;transform-origin:0 0;transform:scaleX(0.8850);">00:34</span>
<span class="t" style="top:892.34px;font-size:12px;line-height:12px;color:#000;left:404.00px;transform-origin:0 0;transform:scaleX(0.8850);">07:58</span>
<span class="t" style="top:892.34px;font-size:12px;line-height:12px;color:#000;left:832.00px;transform-origin:0 0;transform:scaleX(0.8850);">15:42</span>
<span class="t" style="top:892.34px;font-size:12px;line-height:12px;color:#000;left:931.00px;transform-origin:0 0;transform:scaleX(0.8850);">18:30</span>
<div class="a" style="left:514px;top:132px;width:724px;height:185px;background:#d4d0c8;box-sizing:border-box;border:1px solid;border-color:#d4d0c8 #404040 #404040 #d4d0c8;box-shadow:inset 1px 1px 0 #fff,inset -1px -1px 0 #808080"></div>
<div class="a" style="left:518px;top:136px;width:714px;height:25px;background:linear-gradient(90deg,#0a246a 0%,#a6caf0 100%)"></div>
<svg style="left:520px;top:138px" width="22" height="22" viewBox="0 0 22 22"><path d="M1.500 4L4.500 1.500L7 2.500L9 4L11 6.500L14 9L18.500 12L16 15L12 17L6 18.500L1.500 18.500Z" fill="#b8b8b8"/><path d="M3 4.500L5 2.500L8 4L10.500 7L13 10L17 12.500L12 13L8 12L4 9Z" fill="#f4f0fa"/><path d="M5 5l1 2M7 8l-1 2" stroke="#8070c0" stroke-width="1" fill="none"/><path d="M1.500 5v10" stroke="#303030" stroke-width="1" stroke-dasharray="1 1.500"/><path d="M1 14.500L6 15.500L11 15L16 13.500L18.500 13L16 16L12 17.500L9 19L6 18L4 19.500L1.500 18.500Z" fill="#101010"/><circle cx="14.200" cy="4.600" r="4" fill="#f4ec00" stroke="#181800" stroke-width="1" stroke-dasharray="2 1"/><circle cx="14.600" cy="4.200" r="2" fill="#fff820"/></svg>
<span class="t" style="top:140.36px;font-size:18px;line-height:18px;color:#fff;font-family:'DejaVu Sans Condensed','DejaVu Sans',sans-serif;font-weight:bold;left:546.00px;transform-origin:0 0;transform:scaleX(1.0482);">Minimal- und Maximalwerte</span>
<div class="btn" style="left:1167px;top:138px;width:21px;height:20px"></div>
<div class="btn" style="left:1188px;top:138px;width:21px;height:20px"></div>
<div class="btn" style="left:1211px;top:138px;width:21px;height:20px"></div>
<svg style="left:1167px;top:138px" width="66" height="20" viewBox="0 0 66 20"><rect x="5" y="14" width="8" height="2.4" fill="#000"/><rect x="26.5" y="6.5" width="11" height="10" fill="none" stroke="#fff" stroke-width="1"/><rect x="25.5" y="5.500" width="11" height="10" fill="none" stroke="#808080" stroke-width="1"/><rect x="25" y="5" width="12" height="2" fill="#808080"/><path d="M49.5 5 L60 15 M60 5 L49.5 15" stroke="#000" stroke-width="2.2" fill="none"/></svg>
<div class="a" style="left:530px;top:170px;width:237px;height:17px;background:#fff;box-sizing:border-box;border:1px solid;border-color:#808080 #fff #fff #808080;box-shadow:inset 1px 1px 0 #404040"></div>
<span class="t" style="top:172.64px;font-size:12px;line-height:12px;color:#000;left:535.60px;transform-origin:0 0;transform:scaleX(0.8986);">Mittwoch, 22.10.2008</span>
<div class="a" style="left:530px;top:199px;width:624px;height:98px;background:#fff;box-sizing:border-box;border:1px solid;border-color:#808080 #fff #fff #808080;box-shadow:inset 1px 1px 0 #404040"></div>
<div class="a" style="left:532px;top:201px;width:150px;height:18px;background:#d4d0c8;box-sizing:border-box;border:1px solid;border-color:#fff #404040 #d4d0c8 #fff;"></div>
<div class="a" style="left:683px;top:201px;width:70px;height:18px;background:#d4d0c8;box-sizing:border-box;border:1px solid;border-color:#fff #404040 #d4d0c8 #fff;"></div>
<div class="a" style="left:754px;top:201px;width:50px;height:18px;background:#d4d0c8;box-sizing:border-box;border:1px solid;border-color:#fff #404040 #d4d0c8 #fff;"></div>
<div class="a" style="left:807px;top:201px;width:70px;height:18px;background:#d4d0c8;box-sizing:border-box;border:1px solid;border-color:#fff #404040 #d4d0c8 #fff;"></div>
<div class="a" style="left:878px;top:201px;width:51px;height:18px;background:#d4d0c8;box-sizing:border-box;border:1px solid;border-color:#fff #404040 #d4d0c8 #fff;"></div>
<div class="a" style="left:930px;top:201px;width:70px;height:18px;background:#d4d0c8;box-sizing:border-box;border:1px solid;border-color:#fff #404040 #d4d0c8 #fff;"></div>
<div class="a" style="left:532px;top:219px;width:469px;height:1px;background:#000"></div>
<div class="a" style="left:804px;top:201px;width:3px;height:19px;background:#000"></div>
<div class="a" style="left:682px;top:220px;width:1px;height:76px;background:#c0c0c0"></div>
<div class="a" style="left:753px;top:220px;width:1px;height:76px;background:#c0c0c0"></div>
<div class="a" style="left:804px;top:220px;width:1px;height:76px;background:#c0c0c0"></div>
<div class="a" style="left:877px;top:220px;width:1px;height:76px;background:#c0c0c0"></div>
<div class="a" style="left:929px;top:220px;width:1px;height:76px;background:#c0c0c0"></div>
<div class="a" style="left:1000px;top:220px;width:1px;height:76px;background:#c0c0c0"></div>
<div class="a" style="left:804px;top:220px;width:3px;height:76px;background:#c0c0c0"></div>
<div class="a" style="left:532px;top:238px;width:469px;height:1px;background:#c0c0c0"></div>
<div class="a" style="left:532px;top:257px;width:469px;height:1px;background:#c0c0c0"></div>
<div class="a" style="left:532px;top:276px;width:469px;height:1px;background:#c0c0c0"></div>
<div class="a" style="left:532px;top:295px;width:469px;height:1px;background:#c0c0c0"></div>
<span class="t" style="top:204.04px;font-size:12px;line-height:12px;color:#000;left:533.80px;transform-origin:0 0;transform:scaleX(0.8750);">Meßgröße</span>
<span class="t" style="top:204.04px;font-size:12px;line-height:12px;color:#000;left:700.33px;transform-origin:100% 0;transform:scaleX(0.8750);">Minimum</span>
<span class="t" style="top:204.04px;font-size:12px;line-height:12px;color:#000;left:760.49px;transform-origin:50% 0;transform:scaleX(0.8750);">Uhrzeit</span>
<span class="t" style="top:204.04px;font-size:12px;line-height:12px;color:#000;left:821.00px;transform-origin:100% 0;transform:scaleX(0.8750);">Maximum</span>
<span class="t" style="top:204.04px;font-size:12px;line-height:12px;color:#000;left:884.49px;transform-origin:50% 0;transform:scaleX(0.8750);">Uhrzeit</span>
<span class="t" style="top:204.04px;font-size:12px;line-height:12px;color:#000;left:931.65px;transform-origin:50% 0;transform:scaleX(0.8750);">Durchschnitt</span>
<span class="t" style="top:222.84px;font-size:12px;line-height:12px;color:#000;left:533.60px;transform-origin:0 0;transform:scaleX(0.8750);">Bodentemperatur 1</span>
<span class="t" style="top:222.84px;font-size:12px;line-height:12px;color:#000;left:715.52px;transform-origin:100% 0;transform:scaleX(0.8750);">2.8 °C</span>
<span class="t" style="top:222.84px;font-size:12px;line-height:12px;color:#000;left:764.49px;transform-origin:50% 0;transform:scaleX(0.8750);">22:07</span>
<span class="t" style="top:222.84px;font-size:12px;line-height:12px;color:#000;left:832.85px;transform-origin:100% 0;transform:scaleX(0.8750);">12.8 °C</span>
<span class="t" style="top:222.84px;font-size:12px;line-height:12px;color:#000;left:888.49px;transform-origin:50% 0;transform:scaleX(0.8750);">10:03</span>
<span class="t" style="top:222.84px;font-size:12px;line-height:12px;color:#000;left:955.85px;transform-origin:100% 0;transform:scaleX(0.8750);">7.82 °C</span>
<span class="t" style="top:241.84px;font-size:12px;line-height:12px;color:#000;left:533.60px;transform-origin:0 0;transform:scaleX(0.8750);">Bodentemperatur 2</span>
<span class="t" style="top:241.84px;font-size:12px;line-height:12px;color:#000;left:715.52px;transform-origin:100% 0;transform:scaleX(0.8750);">2.8 °C</span>
<span class="t" style="top:241.84px;font-size:12px;line-height:12px;color:#000;left:764.49px;transform-origin:50% 0;transform:scaleX(0.8750);">22:19</span>
<span class="t" style="top:241.84px;font-size:12px;line-height:12px;color:#000;left:832.85px;transform-origin:100% 0;transform:scaleX(0.8750);">13.3 °C</span>
<span class="t" style="top:241.84px;font-size:12px;line-height:12px;color:#000;left:888.49px;transform-origin:50% 0;transform:scaleX(0.8750);">10:16</span>
<span class="t" style="top:241.84px;font-size:12px;line-height:12px;color:#000;left:955.85px;transform-origin:100% 0;transform:scaleX(0.8750);">8.01 °C</span>
<span class="t" style="top:260.84px;font-size:12px;line-height:12px;color:#000;left:533.60px;transform-origin:0 0;transform:scaleX(0.8750);">Bodentemperatur 3</span>
<span class="t" style="top:260.84px;font-size:12px;line-height:12px;color:#000;left:715.52px;transform-origin:100% 0;transform:scaleX(0.8750);">2.8 °C</span>
<span class="t" style="top:260.84px;font-size:12px;line-height:12px;color:#000;left:764.49px;transform-origin:50% 0;transform:scaleX(0.8750);">22:07</span>
<span class="t" style="top:260.84px;font-size:12px;line-height:12px;color:#000;left:832.85px;transform-origin:100% 0;transform:scaleX(0.8750);">13.3 °C</span>
<span class="t" style="top:260.84px;font-size:12px;line-height:12px;color:#000;left:888.49px;transform-origin:50% 0;transform:scaleX(0.8750);">10:15</span>
<span class="t" style="top:260.84px;font-size:12px;line-height:12px;color:#000;left:955.85px;transform-origin:100% 0;transform:scaleX(0.8750);">7.93 °C</span>
<span class="t" style="top:279.84px;font-size:12px;line-height:12px;color:#000;left:533.60px;transform-origin:0 0;transform:scaleX(0.8750);">Bodentemperatur 4</span>
<span class="t" style="top:279.84px;font-size:12px;line-height:12px;color:#000;left:715.52px;transform-origin:100% 0;transform:scaleX(0.8750);">2.8 °C</span>
<span class="t" style="top:279.84px;font-size:12px;line-height:12px;color:#000;left:764.93px;transform-origin:50% 0;transform:scaleX(0.8750);">22:11</span>
<span class="t" style="top:279.84px;font-size:12px;line-height:12px;color:#000;left:832.85px;transform-origin:100% 0;transform:scaleX(0.8750);">13.3 °C</span>
<span class="t" style="top:279.84px;font-size:12px;line-height:12px;color:#000;left:888.49px;transform-origin:50% 0;transform:scaleX(0.8750);">10:15</span>
<span class="t" style="top:279.84px;font-size:12px;line-height:12px;color:#000;left:955.85px;transform-origin:100% 0;transform:scaleX(0.8750);">7.89 °C</span>
<div class="a" style="left:1131px;top:201px;width:21px;height:94px;background:#e9e7e3;background-image:linear-gradient(45deg,#fff 25%,transparent 25%,transparent 75%,#fff 75%),linear-gradient(45deg,#fff 25%,transparent 25%,transparent 75%,#fff 75%);background-size:2px 2px;background-position:0 0,1px 1px;background-color:#d4d0c8"></div>
<div class="btn" style="left:1131px;top:201px;width:21px;height:21px"></div>
<div class="btn" style="left:1131px;top:225px;width:21px;height:22px"></div>
<div class="btn" style="left:1131px;top:274px;width:21px;height:21px"></div>
<svg style="left:1131px;top:201px" width="21" height="94" viewBox="0 0 21 94"><path d="M6 13h9l-4.5-5z M6 81h9l-4.5 5z" fill="#000"/></svg>
<div class="btn" style="left:1160px;top:200px;width:70px;height:24px"></div>
<span class="t" style="top:205.24px;font-size:12px;line-height:12px;color:#000;left:1168.32px;transform-origin:50% 0;transform:scaleX(0.8750);">Schließen</span>
<div class="a" style="left:1178.7px;top:217px;width:5.2px;height:1px;background:#000"></div>
<div class="btn" style="left:1160px;top:227px;width:70px;height:24px"></div>
<span class="t" style="top:232.24px;font-size:12px;line-height:12px;color:#000;left:1172.66px;transform-origin:50% 0;transform:scaleX(0.8750);">Drucken</span>
<div class="a" style="left:1175.5px;top:244px;width:7.6px;height:1px;background:#000"></div>
<div class="btn" style="left:1160px;top:254px;width:70px;height:24px"></div>
<span class="t" style="top:259.24px;font-size:12px;line-height:12px;color:#000;left:1183.00px;transform-origin:50% 0;transform:scaleX(0.8750);">Hilfe</span>
<div class="a" style="left:1184.5px;top:271px;width:7.6px;height:1px;background:#000"></div>
<div class="a" style="left:0;top:911px;width:1280px;height:90px;background:#c6f8f8"></div>
<div class="a" style="left:0;top:1001px;width:1280px;height:23px;background:#d4d0c8;box-sizing:border-box;border-top:1px solid #808080"></div>
<div class="a" style="left:88px;top:911px;width:1px;height:89px;background:#6c7c84"></div><div class="a" style="left:87px;top:911px;width:1px;height:89px;background:#f0ffff"></div>
<div class="a" style="left:205px;top:911px;width:1px;height:89px;background:#6c7c84"></div><div class="a" style="left:204px;top:911px;width:1px;height:89px;background:#f0ffff"></div>
<div class="a" style="left:323px;top:911px;width:1px;height:89px;background:#6c7c84"></div><div class="a" style="left:322px;top:911px;width:1px;height:89px;background:#f0ffff"></div>
<div class="a" style="left:441px;top:911px;width:1px;height:89px;background:#6c7c84"></div><div class="a" style="left:440px;top:911px;width:1px;height:89px;background:#f0ffff"></div>
<div class="a" style="left:559px;top:911px;width:1px;height:89px;background:#6c7c84"></div><div class="a" style="left:558px;top:911px;width:1px;height:89px;background:#f0ffff"></div>
<div class="a" style="left:677px;top:911px;width:1px;height:89px;background:#6c7c84"></div><div class="a" style="left:676px;top:911px;width:1px;height:89px;background:#f0ffff"></div>
<div class="a" style="left:795px;top:911px;width:1px;height:89px;background:#6c7c84"></div><div class="a" style="left:794px;top:911px;width:1px;height:89px;background:#f0ffff"></div>
<div class="a" style="left:913px;top:911px;width:1px;height:89px;background:#6c7c84"></div><div class="a" style="left:912px;top:911px;width:1px;height:89px;background:#f0ffff"></div>
<span class="t" style="top:918.94px;font-size:12px;line-height:12px;color:#000;font-weight:bold;left:8.00px;transform-origin:0 0;transform:scaleX(0.9750);">Sensor</span>
<span class="t" style="top:935.14px;font-size:12px;line-height:12px;color:#000;font-weight:bold;left:8.00px;transform-origin:0 0;transform:scaleX(0.9750);">MinWert</span>
<span class="t" style="top:951.14px;font-size:12px;line-height:12px;color:#000;font-weight:bold;left:8.00px;transform-origin:0 0;transform:scaleX(0.9750);">MaxWert</span>
<span class="t" style="top:967.14px;font-size:12px;line-height:12px;color:#000;font-weight:bold;left:8.00px;transform-origin:0 0;transform:scaleX(0.9750);">Durchschnitt</span>
<span class="t" style="top:983.14px;font-size:12px;line-height:12px;color:#000;font-weight:bold;left:9.00px;transform-origin:0 0;transform:scaleX(1.0536);">22.10. 23:59</span>
<span class="t" style="top:918.94px;font-size:12px;line-height:12px;color:#000;font-weight:bold;left:95.00px;transform-origin:0 0;transform:scaleX(0.9750);">Temperatur</span>
<span class="t" style="top:918.94px;font-size:12px;line-height:12px;color:#000;font-weight:bold;left:184.53px;transform-origin:100% 0;transform:scaleX(0.9750);">°C</span>
<span class="t" style="top:935.14px;font-size:12px;line-height:12px;color:#000;left:100.00px;transform-origin:0 0;transform:scaleX(0.9050);">22:44</span>
<span class="t" style="top:935.14px;font-size:12px;line-height:12px;color:#000;left:181.32px;transform-origin:100% 0;transform:scaleX(0.9250);">2.2</span>
<span class="t" style="top:951.14px;font-size:12px;line-height:12px;color:#000;left:100.00px;transform-origin:0 0;transform:scaleX(0.9050);">00:10</span>
<span class="t" style="top:951.14px;font-size:12px;line-height:12px;color:#000;left:174.64px;transform-origin:100% 0;transform:scaleX(0.9250);">12.1</span>
<span class="t" style="top:967.14px;font-size:12px;line-height:12px;color:#000;left:174.64px;transform-origin:100% 0;transform:scaleX(0.9250);">7.93</span>
<span class="t" style="top:983.14px;font-size:12px;line-height:12px;color:#000;font-weight:bold;left:181.32px;transform-origin:100% 0;transform:scaleX(1.0600);">2.6</span>
<span class="t" style="top:918.94px;font-size:12px;line-height:12px;color:#000;font-weight:bold;left:211.00px;transform-origin:0 0;transform:scaleX(0.9750);">Feuchte</span>
<span class="t" style="top:918.94px;font-size:12px;line-height:12px;color:#000;font-weight:bold;left:305.33px;transform-origin:100% 0;transform:scaleX(0.9750);">%</span>
<span class="t" style="top:935.14px;font-size:12px;line-height:12px;color:#000;left:217.00px;transform-origin:0 0;transform:scaleX(0.9050);">00:04</span>
<span class="t" style="top:935.14px;font-size:12px;line-height:12px;color:#000;left:302.65px;transform-origin:100% 0;transform:scaleX(0.9250);">91</span>
<span class="t" style="top:951.14px;font-size:12px;line-height:12px;color:#000;left:217.00px;transform-origin:0 0;transform:scaleX(0.9050);">10:46</span>
<span class="t" style="top:951.14px;font-size:12px;line-height:12px;color:#000;left:302.65px;transform-origin:100% 0;transform:scaleX(0.9250);">97</span>
<span class="t" style="top:967.14px;font-size:12px;line-height:12px;color:#000;left:302.65px;transform-origin:100% 0;transform:scaleX(0.9250);">95</span>
<span class="t" style="top:983.14px;font-size:12px;line-height:12px;color:#000;left:214.00px;transform-origin:0 0;transform:scaleX(0.9050);">5.56 g/m³</span>
<span class="t" style="top:983.14px;font-size:12px;line-height:12px;color:#000;font-weight:bold;left:302.65px;transform-origin:100% 0;transform:scaleX(1.0600);">96</span>
<span class="t" style="top:918.94px;font-size:12px;line-height:12px;color:#000;font-weight:bold;left:329.00px;transform-origin:0 0;transform:scaleX(0.9750);">Luftdruck</span>
<span class="t" style="top:918.94px;font-size:12px;line-height:12px;color:#000;font-weight:bold;left:410.99px;transform-origin:100% 0;transform:scaleX(0.9750);">hPa</span>
<span class="t" style="top:935.14px;font-size:12px;line-height:12px;color:#000;left:335.00px;transform-origin:0 0;transform:scaleX(0.9050);">03:41</span>
<span class="t" style="top:935.14px;font-size:12px;line-height:12px;color:#000;left:396.30px;transform-origin:100% 0;transform:scaleX(0.9250);">1012.6</span>
<span class="t" style="top:951.14px;font-size:12px;line-height:12px;color:#000;left:335.00px;transform-origin:0 0;transform:scaleX(0.9050);">23:01</span>
<span class="t" style="top:951.14px;font-size:12px;line-height:12px;color:#000;left:396.30px;transform-origin:100% 0;transform:scaleX(0.9250);">1029.0</span>
<span class="t" style="top:967.14px;font-size:12px;line-height:12px;color:#000;left:329.00px;transform-origin:0 0;transform:scaleX(0.9050);">^2.1hPa/h</span>
<span class="t" style="top:967.14px;font-size:12px;line-height:12px;color:#000;left:396.30px;transform-origin:100% 0;transform:scaleX(0.9250);">1018.5</span>
<span class="t" style="top:983.14px;font-size:12px;line-height:12px;color:#000;left:329.00px;transform-origin:0 0;transform:scaleX(0.9050);">sonnig</span>
<span class="t" style="top:983.14px;font-size:12px;line-height:12px;color:#000;font-weight:bold;left:396.30px;transform-origin:100% 0;transform:scaleX(1.0600);">1028.5</span>
<div class="a" style="left:385px;top:983px;width:9px;height:13px;background:#d4d0c8"></div>
<svg style="left:385px;top:983px" width="9" height="13" viewBox="0 0 9 13"><path d="M4.5 1L8.5 6H5.7V12H3.3V6H0.5Z" fill="#000"/></svg>
<span class="t" style="top:918.94px;font-size:12px;line-height:12px;color:#000;font-weight:bold;left:447.00px;transform-origin:0 0;transform:scaleX(0.9750);">Windböen</span>
<span class="t" style="top:918.94px;font-size:12px;line-height:12px;color:#000;font-weight:bold;left:522.99px;transform-origin:100% 0;transform:scaleX(0.9750);">km/h</span>
<span class="t" style="top:935.14px;font-size:12px;line-height:12px;color:#000;left:447.00px;transform-origin:0 0;transform:scaleX(0.9050);">Ø 10 min.</span>
<span class="t" style="top:935.14px;font-size:12px;line-height:12px;color:#000;left:534.32px;transform-origin:100% 0;transform:scaleX(0.9250);">0.6</span>
<span class="t" style="top:951.14px;font-size:12px;line-height:12px;color:#000;left:453.00px;transform-origin:0 0;transform:scaleX(0.9050);">00:32</span>
<span class="t" style="top:951.14px;font-size:12px;line-height:12px;color:#000;left:512.98px;transform-origin:100% 0;transform:scaleX(0.9050);">W 22.5</span>
<span class="t" style="top:967.14px;font-size:12px;line-height:12px;color:#000;left:534.32px;transform-origin:100% 0;transform:scaleX(0.9250);">5.6</span>
<span class="t" style="top:983.14px;font-size:12px;line-height:12px;color:#000;left:453.00px;transform-origin:0 0;transform:scaleX(0.9050);">0 Bft NO</span>
<span class="t" style="top:983.14px;font-size:12px;line-height:12px;color:#000;font-weight:bold;left:534.32px;transform-origin:100% 0;transform:scaleX(1.0600);">0.0</span>
<span class="t" style="top:918.94px;font-size:12px;line-height:12px;color:#000;font-weight:bold;left:565.00px;transform-origin:0 0;transform:scaleX(0.9750);">Regen</span>
<span class="t" style="top:918.94px;font-size:12px;line-height:12px;color:#000;font-weight:bold;left:647.67px;transform-origin:100% 0;transform:scaleX(0.9750);">l/m²</span>
<span class="t" style="top:951.14px;font-size:12px;line-height:12px;color:#000;left:571.00px;transform-origin:0 0;transform:scaleX(0.9050);">11:40</span>
<span class="t" style="top:951.14px;font-size:12px;line-height:12px;color:#000;left:652.32px;transform-origin:100% 0;transform:scaleX(0.9250);">0.2</span>
<span class="t" style="top:967.14px;font-size:12px;line-height:12px;color:#000;left:565.00px;transform-origin:0 0;transform:scaleX(0.9050);">Gesamt:</span>
<span class="t" style="top:967.14px;font-size:12px;line-height:12px;color:#000;left:652.32px;transform-origin:100% 0;transform:scaleX(0.9250);">8.4</span>
<span class="t" style="top:983.14px;font-size:12px;line-height:12px;color:#000;left:568.00px;transform-origin:0 0;transform:scaleX(0.9050);">8.4 l/m²</span>
<span class="t" style="top:983.14px;font-size:12px;line-height:12px;color:#000;font-weight:bold;left:652.32px;transform-origin:100% 0;transform:scaleX(1.0600);">0.0</span>
<span class="t" style="top:918.94px;font-size:12px;line-height:12px;color:#000;font-weight:bold;left:684.00px;transform-origin:0 0;transform:scaleX(0.9750);">Solar</span>
<span class="t" style="top:918.94px;font-size:12px;line-height:12px;color:#000;font-weight:bold;left:757.67px;transform-origin:100% 0;transform:scaleX(0.9750);">W/m²</span>
<span class="t" style="top:935.14px;font-size:12px;line-height:12px;color:#000;left:684.00px;transform-origin:0 0;transform:scaleX(0.9050);">Elevation</span>
<span class="t" style="top:935.14px;font-size:12px;line-height:12px;color:#000;left:746.30px;transform-origin:100% 0;transform:scaleX(0.9250);">-51.193</span>
<span class="t" style="top:951.14px;font-size:12px;line-height:12px;color:#000;left:689.00px;transform-origin:0 0;transform:scaleX(0.9050);">10:15</span>
<span class="t" style="top:951.14px;font-size:12px;line-height:12px;color:#000;left:766.98px;transform-origin:100% 0;transform:scaleX(0.9250);">109</span>
<span class="t" style="top:967.14px;font-size:12px;line-height:12px;color:#000;left:684.00px;transform-origin:0 0;transform:scaleX(0.9050);">0 min.</span>
<span class="t" style="top:967.14px;font-size:12px;line-height:12px;color:#000;left:763.64px;transform-origin:100% 0;transform:scaleX(0.9250);">42.3</span>
<span class="t" style="top:983.14px;font-size:12px;line-height:12px;color:#000;left:684.00px;transform-origin:0 0;transform:scaleX(0.9050);">dunkel</span>
<span class="t" style="top:983.14px;font-size:12px;line-height:12px;color:#000;font-weight:bold;left:780.33px;transform-origin:100% 0;transform:scaleX(1.0600);">0</span>
<span class="t" style="top:918.94px;font-size:12px;line-height:12px;color:#000;font-weight:bold;left:801.00px;transform-origin:0 0;transform:scaleX(0.9750);">Sonnenschein min</span>
<span class="t" style="top:951.14px;font-size:12px;line-height:12px;color:#000;left:807.00px;transform-origin:0 0;transform:scaleX(0.9050);">00:00</span>
<span class="t" style="top:951.14px;font-size:12px;line-height:12px;color:#000;left:898.33px;transform-origin:100% 0;transform:scaleX(0.9250);">0</span>
<span class="t" style="top:967.14px;font-size:12px;line-height:12px;color:#000;left:801.00px;transform-origin:0 0;transform:scaleX(0.9050);">0 min.</span>
<span class="t" style="top:967.14px;font-size:12px;line-height:12px;color:#000;left:898.33px;transform-origin:100% 0;transform:scaleX(0.9250);">0</span>
<span class="t" style="top:983.14px;font-size:12px;line-height:12px;color:#000;font-weight:bold;left:898.33px;transform-origin:100% 0;transform:scaleX(1.0600);">0</span>
<span class="t" style="top:918.94px;font-size:12px;line-height:12px;color:#000;font-weight:bold;left:920.00px;transform-origin:0 0;transform:scaleX(0.9750);">Taupunkt</span>
<span class="t" style="top:918.94px;font-size:12px;line-height:12px;color:#000;font-weight:bold;left:1007.53px;transform-origin:100% 0;transform:scaleX(0.9750);">°C</span>
<span class="t" style="top:935.14px;font-size:12px;line-height:12px;color:#000;left:925.00px;transform-origin:0 0;transform:scaleX(0.9050);">23:36</span>
<span class="t" style="top:935.14px;font-size:12px;line-height:12px;color:#000;left:1004.32px;transform-origin:100% 0;transform:scaleX(0.9250);">1.6</span>
<span class="t" style="top:951.14px;font-size:12px;line-height:12px;color:#000;left:925.00px;transform-origin:0 0;transform:scaleX(0.9050);">01:02</span>
<span class="t" style="top:951.14px;font-size:12px;line-height:12px;color:#000;left:997.64px;transform-origin:100% 0;transform:scaleX(0.9250);">10.9</span>
<span class="t" style="top:967.14px;font-size:12px;line-height:12px;color:#000;left:1004.32px;transform-origin:100% 0;transform:scaleX(0.9250);">7.2</span>
<span class="t" style="top:983.14px;font-size:12px;line-height:12px;color:#000;font-weight:bold;left:1004.32px;transform-origin:100% 0;transform:scaleX(1.0600);">2.0</span>
<div class="sunk" style="left:2px;top:1003px;width:741px;height:19px"></div>
<div class="sunk" style="left:745px;top:1003px;width:194px;height:19px"></div>
<div class="sunk" style="left:941px;top:1003px;width:172px;height:19px"></div>
<div class="sunk" style="left:1115px;top:1003px;width:40px;height:19px"></div>
<div class="sunk" style="left:1158px;top:1003px;width:52px;height:19px"></div>
<div class="sunk" style="left:1212px;top:1003px;width:67px;height:19px"></div>
<span class="t" style="top:1007.24px;font-size:12px;line-height:12px;color:#000;left:694.29px;transform-origin:100% 0;transform:scaleX(0.9000);">12:04:49</span>
<span class="t" style="top:1007.24px;font-size:12px;line-height:12px;color:#000;left:750.80px;transform-origin:0 0;transform:scaleX(0.8968);">Mittwoch, 22.10.2008</span>
<span class="t" style="top:1007.24px;font-size:12px;line-height:12px;color:#000;left:943.80px;transform-origin:0 0;transform:scaleX(0.9000);">VantagePro2 gefunden</span>
<span class="t" style="top:1007.24px;font-size:12px;line-height:12px;color:#000;left:1120.00px;transform-origin:0 0;transform:scaleX(0.8552);">COM 3</span>
<span class="t" style="top:1007.24px;font-size:12px;line-height:12px;color:#000;left:1170.80px;transform-origin:0 0;transform:scaleX(0.8758);">12:13</span>
<span class="t" style="top:1007.24px;font-size:12px;line-height:12px;color:#000;left:1218.80px;transform-origin:0 0;transform:scaleX(0.9093);">02.11.2008</span>
</div></body></html>
